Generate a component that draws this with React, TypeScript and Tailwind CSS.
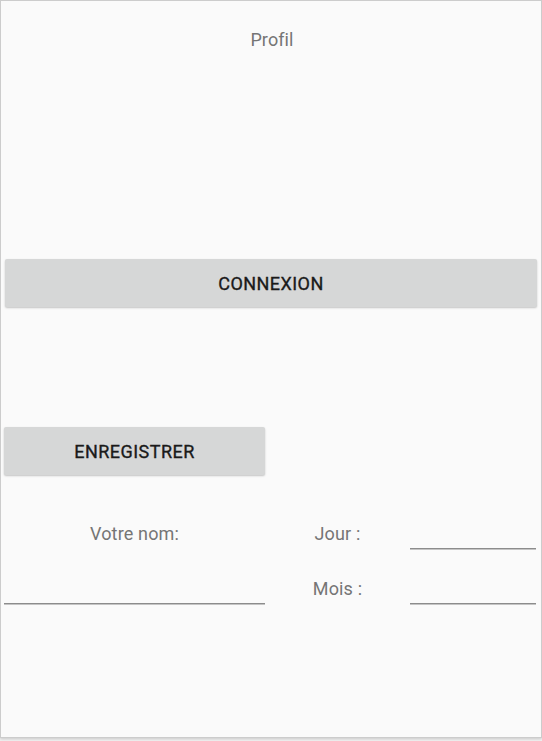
import React from "react";

const font = { fontFamily: "Roboto, 'Noto Sans', sans-serif" };

function Line() {
  return <div className="h-[2px] w-full border-t border-[#8c8c8c] border-b border-b-[#c4c4c4]" />;
}

export default function App() {
  return (
    <div className="w-[542px] h-[741px] bg-[#f2f2f2]" style={font}>
      <div className="w-[542px] h-[738px] border border-[#cccccc] bg-[#fafafa] shadow-[0_1px_3px_rgba(0,0,0,0.18)] flex flex-col">
        <div className="pt-[28px] pl-[2px] text-center text-[18px] leading-[21px] text-[#757575] tracking-[0.1px]">Profil</div>

        <button className="mt-[209px] ml-[4px] w-[532px] h-[48px] rounded-[2px] bg-[#d6d7d7] shadow-[0_1px_2px_rgba(0,0,0,0.22)] text-[#1a1a1a] text-[18px] font-normal tracking-[0.45px] [-webkit-text-stroke:0.35px_#1a1a1a] flex items-center justify-center">
          CONNEXION
        </button>

        <button className="mt-[120px] ml-[3px] w-[261px] h-[48px] rounded-[2px] bg-[#d6d7d7] shadow-[0_1px_2px_rgba(0,0,0,0.22)] text-[#1a1a1a] text-[18px] font-normal tracking-[0.45px] [-webkit-text-stroke:0.35px_#1a1a1a] flex items-center justify-center">
          ENREGISTRER
        </button>

        <div className="mt-[47px] ml-[3px] grid grid-cols-[261px_145px_126px] grid-rows-[28px_55px] text-[18px] leading-[21px] text-[#757575] tracking-[0.15px]">
          <div className="text-center pt-[1px]">Votre nom:</div>
          <div className="text-center pt-[1px]">Jour :</div>
          <div className="flex flex-col justify-end"><Line /></div>

          <div className="flex flex-col justify-end"><Line /></div>
          <div className="text-center pt-[28px]">Mois :</div>
          <div className="flex flex-col justify-end"><Line /></div>
        </div>
      </div>
    </div>
  );
}
